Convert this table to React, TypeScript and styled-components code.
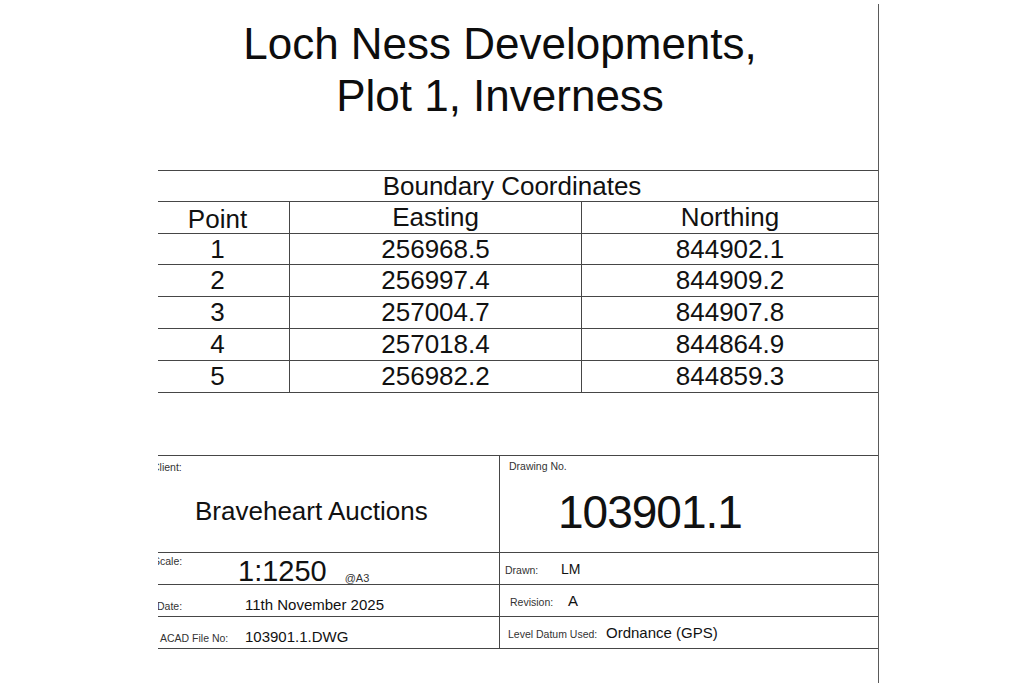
import React from 'react';
import styled, { createGlobalStyle } from 'styled-components';

const LINE = '#464646';

const GlobalStyle = createGlobalStyle`
  html, body {
    margin: 0;
    padding: 0;
    background: #ffffff;
  }
  body {
    font-family: 'Liberation Sans', Arial, sans-serif;
    color: #111111;
  }
`;

// the drawing sheet, cropped on the left; the right border is the frame line
const Sheet = styled.div`
  box-sizing: border-box;
  margin: 4px 0 0 158px;
  width: 721px;
  height: 679px;
  border-right: 1px solid #5a5a5a;
  overflow: hidden;
`;

const Title = styled.h1`
  margin: 0;
  padding: 14px 36px 0 0;
  font-weight: normal;
  font-size: 44px;
  line-height: 52px;
  text-align: center;
  color: #0d0d0d;
`;

const CoordTable = styled.div`
  margin: 48px 0 0 -12px;
  width: 732px;
  border-bottom: 1px solid ${LINE};
`;

const Row = styled.div<{ $h: number; $cols?: string }>`
  box-sizing: border-box;
  display: grid;
  grid-template-columns: ${p => p.$cols ?? '144px 292px 1fr'};
  height: ${p => p.$h}px;
  border-top: 1px solid ${LINE};
`;

const Cell = styled.div<{ $last?: boolean; $lift?: number }>`
  box-sizing: border-box;
  display: flex;
  align-items: center;
  justify-content: center;
  font-size: 26px;
  padding-bottom: ${p => p.$lift ?? 0}px;
  border-right: ${p => (p.$last ? 'none' : `1px solid ${LINE}`)};
`;

const TitleBlock = styled.div`
  margin-top: 62px;
  display: grid;
  grid-template-columns: 342px 1fr;
  grid-template-rows: 97px 32px 32px 32px;
  border-bottom: 1px solid ${LINE};
`;

const BlockCell = styled.div<{ $left?: boolean; $column?: boolean; $align?: string; $pt?: number }>`
  box-sizing: border-box;
  min-width: 0;
  display: flex;
  flex-direction: ${p => (p.$column ? 'column' : 'row')};
  align-items: ${p => p.$align ?? 'center'};
  padding-top: ${p => p.$pt ?? 0}px;
  border-top: 1px solid ${LINE};
  border-right: ${p => (p.$left ? `1px solid ${LINE}` : 'none')};
`;

const Label = styled.span<{ $x: number; $w?: number; $top?: number; $self?: string }>`
  flex: 0 0 ${p => (p.$w ? `${p.$w}px` : 'auto')};
  margin-left: ${p => p.$x}px;
  margin-top: ${p => p.$top ?? 0}px;
  align-self: ${p => p.$self ?? 'auto'};
  font-size: 10.5px;
  line-height: 12px;
  color: #333333;
  white-space: nowrap;
`;

const Pair = styled.div`
  display: flex;
  align-items: baseline;
`;

const Value = styled.span<{ $size: number; $lh?: number; $x?: number; $top?: number; $tight?: number }>`
  margin-left: ${p => p.$x ?? 0}px;
  margin-top: ${p => p.$top ?? 0}px;
  font-size: ${p => p.$size}px;
  line-height: ${p => (p.$lh ? `${p.$lh}px` : 'normal')};
  letter-spacing: ${p => p.$tight ?? 0}px;
  color: #111111;
  white-space: nowrap;
`;

const Suffix = styled.span`
  margin-left: 18px;
  font-size: 11px;
  line-height: 12px;
  color: #333333;
`;

const points = [
  { id: 1, e: '256968.5', n: '844902.1' },
  { id: 2, e: '256997.4', n: '844909.2' },
  { id: 3, e: '257004.7', n: '844907.8' },
  { id: 4, e: '257018.4', n: '844864.9' },
  { id: 5, e: '256982.2', n: '844859.3' },
];

export default function App() {
  return (
    <>
      <GlobalStyle />
      <Sheet>
        <Title>
          Loch Ness Developments,
          <br />
          Plot 1, Inverness
        </Title>

        <CoordTable>
          <Row $h={31} $cols="1fr">
            <Cell $last $lift={3}>Boundary Coordinates</Cell>
          </Row>
          <Row $h={32}>
            <Cell $lift={1}>Point</Cell>
            <Cell $lift={5}>Easting</Cell>
            <Cell $last $lift={5}>Northing</Cell>
          </Row>
          {points.map((pt, i) => (
            <Row key={pt.id} $h={i === 0 ? 31 : 32}>
              <Cell>{pt.id}</Cell>
              <Cell>{pt.e}</Cell>
              <Cell $last>{pt.n}</Cell>
            </Row>
          ))}
        </CoordTable>

        <TitleBlock>
          <BlockCell $left $column $align="flex-start">
            <Label $x={-6} $top={5}>Client:</Label>
            <Value $size={26} $lh={30} $x={37} $top={23}>Braveheart Auctions</Value>
          </BlockCell>
          <BlockCell $column $align="flex-start">
            <Label $x={9} $top={4}>Drawing No.</Label>
            <Value $size={46} $lh={46} $x={58} $top={17} $tight={-1}>103901.1</Value>
          </BlockCell>

          <BlockCell $left $align="flex-end">
            <Label $x={-5} $w={85} $top={2} $self="flex-start">Scale:</Label>
            <Value $size={29} $lh={26}>1:1250</Value>
            <Suffix>@A3</Suffix>
          </BlockCell>
          <BlockCell>
            <Pair>
              <Label $x={5} $w={56}>Drawn:</Label>
              <Value $size={14}>LM</Value>
            </Pair>
          </BlockCell>

          <BlockCell $left $pt={8}>
            <Pair>
              <Label $x={-1} $w={88}>Date:</Label>
              <Value $size={15}>11th November 2025</Value>
            </Pair>
          </BlockCell>
          <BlockCell>
            <Pair>
              <Label $x={10} $w={58}>Revision:</Label>
              <Value $size={15}>A</Value>
            </Pair>
          </BlockCell>

          <BlockCell $left $pt={8}>
            <Pair>
              <Label $x={2} $w={85}>ACAD File No:</Label>
              <Value $size={15}>103901.1.DWG</Value>
            </Pair>
          </BlockCell>
          <BlockCell>
            <Pair>
              <Label $x={8} $w={98}>Level Datum Used:</Label>
              <Value $size={15}>Ordnance (GPS)</Value>
            </Pair>
          </BlockCell>
        </TitleBlock>
      </Sheet>
    </>
  );
}
